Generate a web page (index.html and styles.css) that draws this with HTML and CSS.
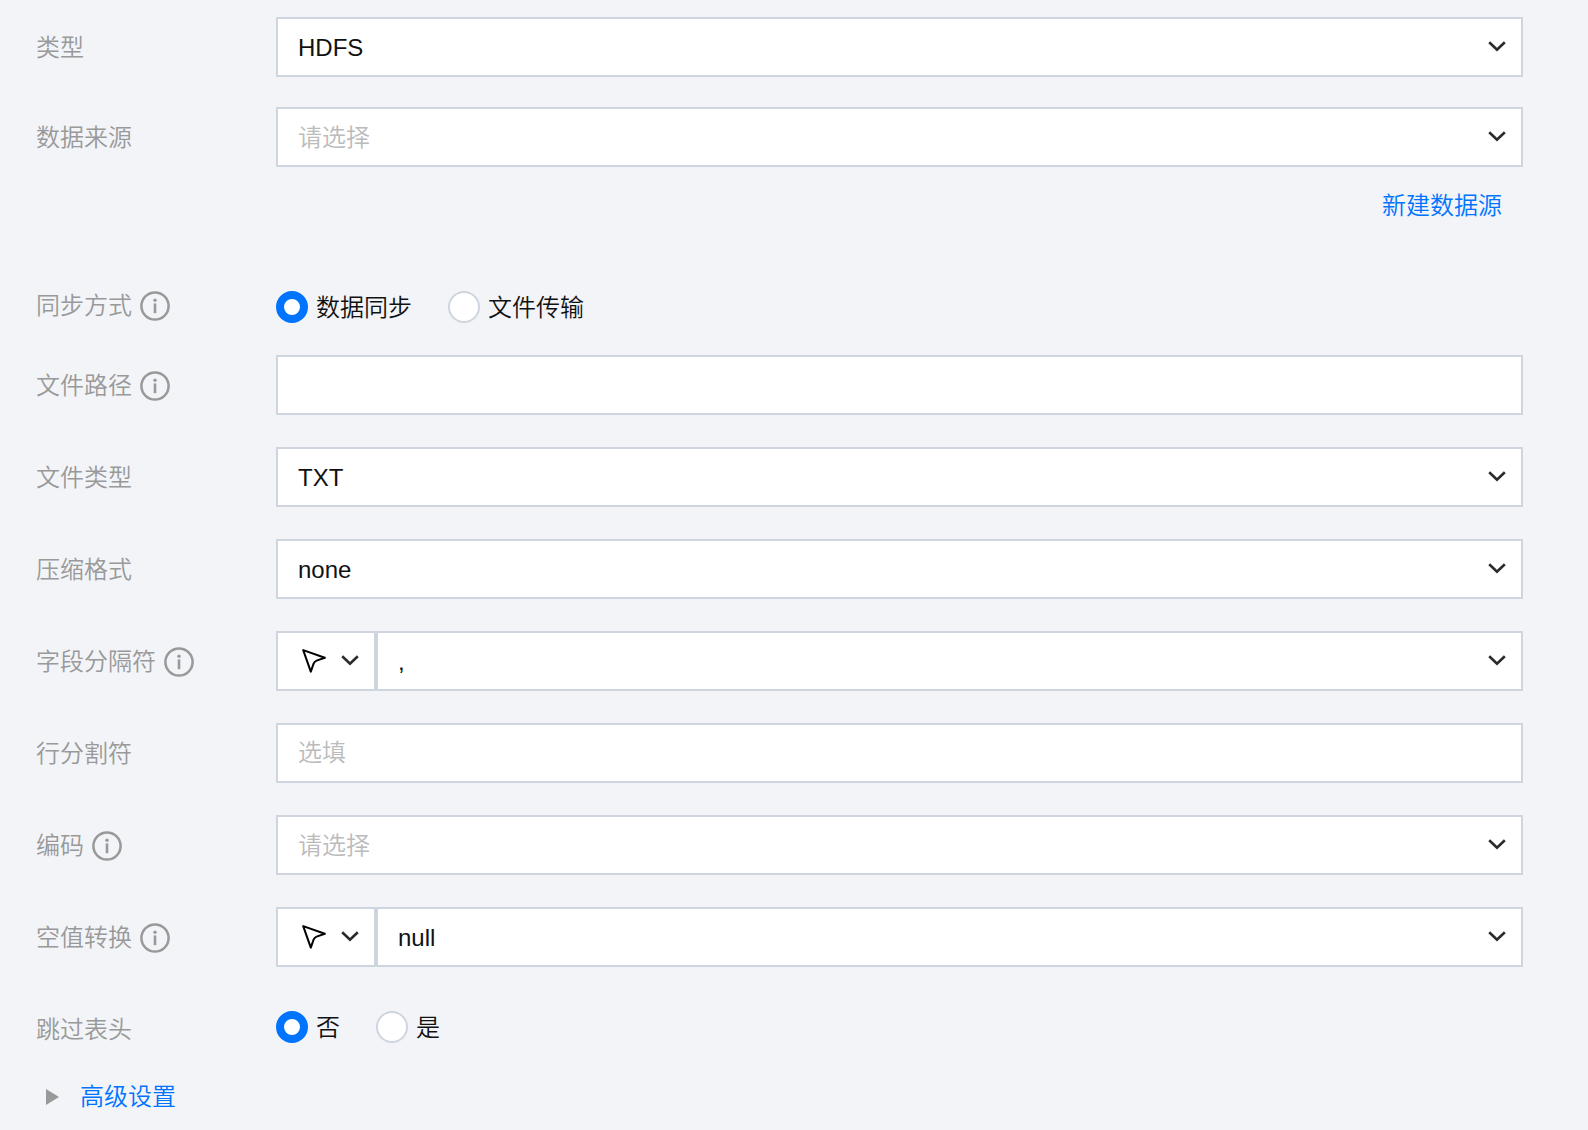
FILE: index.html
```html
<!DOCTYPE html>
<html lang="zh-CN">
<head>
  <meta charset="UTF-8">
  <meta name="viewport" content="width=device-width, initial-scale=1.0">
  <title>数据来源</title>
  <link rel="stylesheet" href="styles.css">
</head>
<body>

  <!-- shared icons -->
  <svg class="sprite" aria-hidden="true">
    <symbol id="icon-info" viewBox="0 0 30 30">
      <circle cx="15" cy="15" r="13.6" fill="none" stroke="currentColor" stroke-width="2.5"/>
      <circle cx="15" cy="9.2" r="1.7" fill="currentColor"/>
      <rect x="13.7" y="12.4" width="2.6" height="9.8" fill="currentColor"/>
    </symbol>
    <symbol id="icon-arrow" viewBox="0 0 18 12">
      <path d="M1.2 1.2 L9 8.8 L16.8 1.2" fill="none" stroke="currentColor" stroke-width="2.6"/>
    </symbol>
    <symbol id="icon-cursor" viewBox="0 0 24 24">
      <path d="M1.2 1.1 L22.8 8.8 L14.6 11.6 Q12.4 12.4 11.6 14.6 L8.8 22.6 Z" fill="none" stroke="currentColor" stroke-width="2" stroke-linejoin="round"/>
    </symbol>
  </svg>

  <form class="form">
    <div class="row row-tight">
      <label class="label" for="type">类型</label>
      <div class="select-box">
        <select id="type" class="field"><option>HDFS</option></select>
        <svg class="arrow"><use href="#icon-arrow"/></svg>
      </div>
    </div>

    <div class="row row-source">
      <label class="label" for="source">数据来源</label>
      <div class="select-box">
        <select id="source" class="field empty"><option>请选择</option></select>
        <svg class="arrow"><use href="#icon-arrow"/></svg>
      </div>
    </div>
    <div class="extra"><a class="link" href="#">新建数据源</a></div>

    <div class="row row-mode" role="radiogroup" aria-labelledby="mode-label">
      <div class="label" id="mode-label">同步方式 <svg class="info"><use href="#icon-info"/></svg></div>
      <div class="radios">
        <label class="radio"><input type="radio" name="mode" checked>数据同步</label>
        <label class="radio"><input type="radio" name="mode">文件传输</label>
      </div>
    </div>

    <div class="row">
      <label class="label" for="path">文件路径 <svg class="info"><use href="#icon-info"/></svg></label>
      <input id="path" class="field" type="text">
    </div>

    <div class="row">
      <label class="label" for="filetype">文件类型</label>
      <div class="select-box">
        <select id="filetype" class="field"><option>TXT</option></select>
        <svg class="arrow"><use href="#icon-arrow"/></svg>
      </div>
    </div>

    <div class="row">
      <label class="label" for="compress">压缩格式</label>
      <div class="select-box">
        <select id="compress" class="field"><option>none</option></select>
        <svg class="arrow"><use href="#icon-arrow"/></svg>
      </div>
    </div>

    <div class="row">
      <label class="label" for="separator">字段分隔符 <svg class="info"><use href="#icon-info"/></svg></label>
      <div class="combo">
        <button class="picker" type="button" aria-label="选择方式">
          <svg class="cursor"><use href="#icon-cursor"/></svg>
          <svg class="arrow"><use href="#icon-arrow"/></svg>
        </button>
        <div class="select-box">
          <select id="separator" class="field"><option>,</option></select>
          <svg class="arrow"><use href="#icon-arrow"/></svg>
        </div>
      </div>
    </div>

    <div class="row">
      <label class="label" for="line">行分割符</label>
      <input id="line" class="field" type="text" placeholder="选填">
    </div>

    <div class="row">
      <label class="label" for="encoding">编码 <svg class="info"><use href="#icon-info"/></svg></label>
      <div class="select-box">
        <select id="encoding" class="field empty"><option>请选择</option></select>
        <svg class="arrow"><use href="#icon-arrow"/></svg>
      </div>
    </div>

    <div class="row">
      <label class="label" for="nullvalue">空值转换 <svg class="info"><use href="#icon-info"/></svg></label>
      <div class="combo">
        <button class="picker" type="button" aria-label="选择方式">
          <svg class="cursor"><use href="#icon-cursor"/></svg>
          <svg class="arrow"><use href="#icon-arrow"/></svg>
        </button>
        <div class="select-box">
          <select id="nullvalue" class="field"><option>null</option></select>
          <svg class="arrow"><use href="#icon-arrow"/></svg>
        </div>
      </div>
    </div>

    <div class="row row-header" role="radiogroup" aria-labelledby="header-label">
      <div class="label" id="header-label">跳过表头</div>
      <div class="radios">
        <label class="radio"><input type="radio" name="header" checked>否</label>
        <label class="radio"><input type="radio" name="header">是</label>
      </div>
    </div>

    <button class="advanced" type="button" aria-expanded="false">高级设置</button>
  </form>

</body>
</html>
```

FILE: styles.css
```css
* {
  box-sizing: border-box;
}

body {
  margin: 0;
  background: #f2f4f8;
  color: #111;
  font-family: "Liberation Sans", "Noto Sans CJK SC", sans-serif;
  font-size: 24px;
  font-weight: 350;
  line-height: 36px;
}

button,
input,
select {
  font: inherit;
  color: inherit;
}

.sprite {
  display: none;
}

.form {
  padding: 17px 65px 16px 36px;
}

.row {
  display: grid;
  grid-template-columns: 240px 1fr;
  align-items: center;
  min-height: 60px;
  margin-bottom: 32px;
}

.row-tight {
  margin-bottom: 30px;
}

.row-source {
  margin-bottom: 21px;
}

.row-mode {
  margin-bottom: 18px;
}

.row-header {
  margin-bottom: 20px;
}

.label {
  display: flex;
  align-items: center;
  gap: 8px;
  padding-top: 2px;
  color: #999;
}

.row-mode .label {
  padding: 0 0 2px;
}

.info {
  width: 30px;
  height: 30px;
}

.field {
  width: 100%;
  height: 60px;
  margin: 0;
  padding: 0 20px;
  background: #fff;
  border: 2px solid #cfd5de;
  border-radius: 0;
  outline: none;
  appearance: none;
}

select.field {
  padding-top: 2px;
}

.empty,
.field::placeholder {
  color: #bbb;
  opacity: 1;
}

.select-box {
  display: grid;
  flex: 1;
  align-items: center;
}

/* the arrow shares the select's grid cell */
.select-box > * {
  grid-area: 1 / 1;
}

.select-box .arrow {
  justify-self: end;
  margin-right: 17px;
  pointer-events: none;
}

.arrow {
  width: 18px;
  height: 12px;
  color: #2b2b2b;
}

.combo {
  display: flex;
}

.picker {
  display: flex;
  align-items: center;
  justify-content: space-between;
  width: 100px;
  height: 60px;
  padding: 0 15px 0 24px;
  background: #fff;
  border: 2px solid #cfd5de;
}

.cursor {
  width: 24px;
  height: 24px;
  color: #000;
}

.extra {
  display: flex;
  justify-content: flex-end;
  margin-bottom: 53px;
  padding-right: 21px;
}

.link {
  color: #0073ff;
  text-decoration: none;
}

.radios {
  display: flex;
  gap: 36px;
  padding-top: 2px;
}

.row-header .radios {
  padding: 0 0 2px;
}

.radio {
  display: flex;
  align-items: center;
  gap: 8px;
}

.radio input {
  width: 32px;
  height: 32px;
  margin: 0 0 2px;
  background: #fff;
  border: 2px solid #cfd5de;
  border-radius: 50%;
  appearance: none;
}

.radio input:checked {
  border: 8px solid #0073ff;
}

.advanced {
  display: flex;
  align-items: center;
  gap: 21px;
  padding: 0 0 0 10px;
  background: none;
  border: 0;
  color: #0073ff;
}

.advanced::before {
  content: "";
  border: solid transparent;
  border-width: 8px 0 8px 13px;
  border-left-color: #999;
}
```
